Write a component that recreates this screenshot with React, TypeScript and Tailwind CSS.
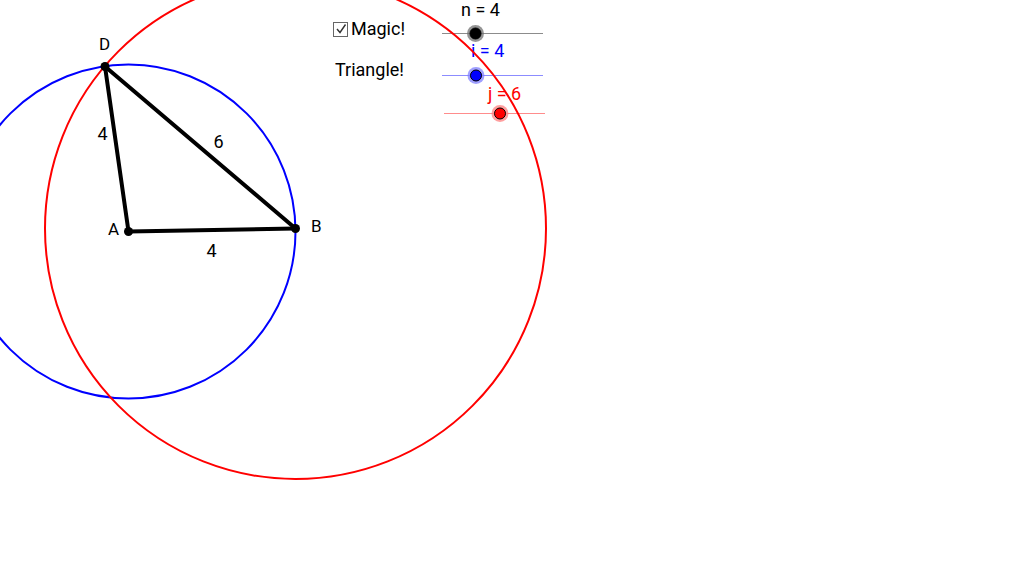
import React from 'react';

const FONT = 'Roboto, "Open Sans", sans-serif';

function Slider({ x1, x2, y, knob, color, halo, line, label, lx, ly }: {
  x1: number; x2: number; y: number; knob: number; color: string; halo: string; line: string; label: string; lx: number; ly: number;
}) {
  return (
    <g>
      <line x1={x1} y1={y} x2={x2} y2={y} stroke={line} strokeWidth={1.2} />
      <circle cx={knob} cy={y} r={8.5} fill={halo} fillOpacity={0.75} />
      <circle cx={knob} cy={y} r={5.5} fill={color} stroke="#000" strokeWidth={1} />
      <text x={lx} y={ly} fill={color} fontSize={18} fontFamily={FONT}>
        {label}
      </text>
    </g>
  );
}

export default function App() {
  const A = { x: 128.5, y: 231.5 };
  const B = { x: 295.5, y: 228.5 };
  const D = { x: 105, y: 66.5 };

  return (
    <div className="relative w-[1024px] h-[570px] bg-white overflow-hidden">
      <svg width={1024} height={570} className="absolute inset-0">
        <Slider x1={442} x2={543} y={33.5} knob={475.5} color="#000000" halo="#707070" line="#8c8c8c" label="n = 4" lx={461} ly={16} />
        <Slider x1={442} x2={543} y={75.5} knob={476} color="#0000ff" halo="#7f7fff" line="#8c8cff" label="i = 4" lx={471} ly={57} />
        <Slider x1={444} x2={545} y={113.5} knob={500} color="#ff0000" halo="#ff7f7f" line="#ff8c8c" label="j = 6" lx={488} ly={100} />

        {/* circles */}
        <circle cx={A.x} cy={A.y} r={167} fill="none" stroke="#0000ff" strokeWidth={2} />
        <circle cx={B.x} cy={B.y} r={250.5} fill="none" stroke="#ff0000" strokeWidth={2} />

        {/* triangle */}
        <g stroke="#000" strokeWidth={4} strokeLinecap="round">
          <line x1={A.x} y1={A.y} x2={B.x} y2={B.y} />
          <line x1={A.x} y1={A.y} x2={D.x} y2={D.y} />
          <line x1={D.x} y1={D.y} x2={B.x} y2={B.y} />
        </g>
        <circle cx={A.x} cy={A.y} r={4.5} fill="#000" />
        <circle cx={B.x} cy={B.y} r={4.5} fill="#000" />
        <circle cx={D.x} cy={D.y} r={4.5} fill="#000" />

        <g fontSize={17} fontFamily={FONT} fill="#000">
          <text x={99} y={50}>D</text>
          <text x={108} y={235}>A</text>
          <text x={311} y={232}>B</text>
        </g>
        <g fontSize={18} fontFamily={FONT} fill="#000">
          <text x={97.5} y={140}>4</text>
          <text x={213.5} y={148}>6</text>
          <text x={206.5} y={257}>4</text>
        </g>
      </svg>

      <div className="absolute left-[333px] top-[20px] flex items-center gap-[3px] text-[18px] leading-[18px] text-black" style={{ fontFamily: FONT }}>
        <span className="flex h-[15px] w-[15px] items-center justify-center border border-[#666] bg-white">
          <svg width={12} height={12} viewBox="0 0 12 12">
            <path d="M2 6 L5 9.5 L10.5 1.5" fill="none" stroke="#333" strokeWidth={1.4} />
          </svg>
        </span>
        <span>Magic!</span>
      </div>
      <div className="absolute left-[335px] top-[61px] text-[18px] leading-[18px] text-black" style={{ fontFamily: FONT }}>
        Triangle!
      </div>
    </div>
  );
}
